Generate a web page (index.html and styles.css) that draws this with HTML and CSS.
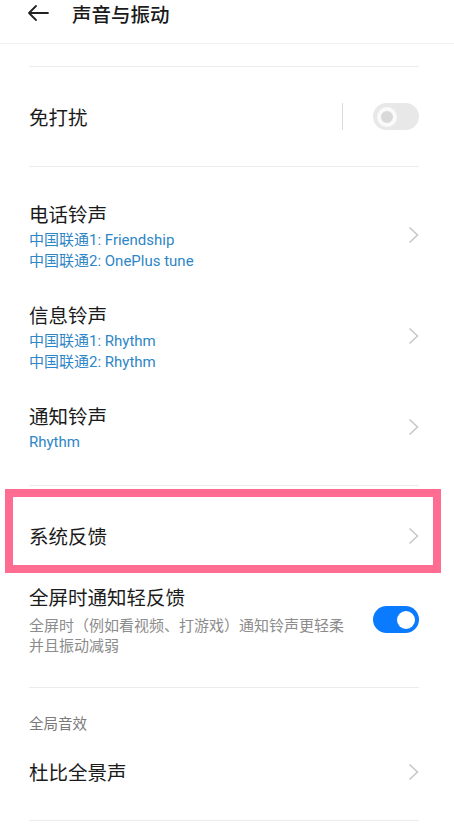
FILE: index.html
```html
<!DOCTYPE html>
<html lang="zh-CN">
<head>
<meta charset="utf-8">
<title>声音与振动</title>
<link rel="stylesheet" href="styles.css">
</head>
<body>
<div class="page">
  <header class="topbar">
    <svg class="back" width="22" height="18" viewBox="0 0 22 18"><path d="M21 9H2M9 2L2 9l7 7" fill="none" stroke="#222" stroke-width="1.8" stroke-linecap="round" stroke-linejoin="round"/></svg>
    <h1 class="title">声音与振动</h1>
  </header>

  <div class="gap-top"></div>
  <div class="divider"></div>

  <div class="row row-dnd">
    <span class="label">免打扰</span>
    <div class="switch-wrap">
      <span class="vline"></span>
      <span class="switch off"><span class="knob"></span></span>
    </div>
  </div>
  <div class="divider"></div>

  <section class="tones">
    <div class="item">
      <div class="text">
        <div class="label">电话铃声</div>
        <div class="sub">中国联通1: Friendship</div>
        <div class="sub">中国联通2: OnePlus tune</div>
      </div>
      <svg class="chev" width="11" height="18" viewBox="0 0 11 18"><path d="M1.5 1.5L9.5 9l-8 7.5" fill="none" stroke="#c6c6c6" stroke-width="1.5"/></svg>
    </div>
    <div class="item">
      <div class="text">
        <div class="label">信息铃声</div>
        <div class="sub">中国联通1: Rhythm</div>
        <div class="sub">中国联通2: Rhythm</div>
      </div>
      <svg class="chev" width="11" height="18" viewBox="0 0 11 18"><path d="M1.5 1.5L9.5 9l-8 7.5" fill="none" stroke="#c6c6c6" stroke-width="1.5"/></svg>
    </div>
    <div class="item">
      <div class="text">
        <div class="label">通知铃声</div>
        <div class="sub">Rhythm</div>
      </div>
      <svg class="chev" width="11" height="18" viewBox="0 0 11 18"><path d="M1.5 1.5L9.5 9l-8 7.5" fill="none" stroke="#c6c6c6" stroke-width="1.5"/></svg>
    </div>
  </section>
  <div class="divider"></div>

  <div class="row row-sys">
    <span class="label">系统反馈</span>
    <svg class="chev" width="11" height="18" viewBox="0 0 11 18"><path d="M1.5 1.5L9.5 9l-8 7.5" fill="none" stroke="#c6c6c6" stroke-width="1.5"/></svg>
    <div class="highlight"></div>
  </div>

  <div class="row row-full">
    <div class="text">
      <div class="label">全屏时通知轻反馈</div>
      <div class="desc">全屏时（例如看视频、打游戏）通知铃声更轻柔<br>并且振动减弱</div>
    </div>
    <span class="switch on"><span class="knob"></span></span>
  </div>
  <div class="divider"></div>

  <div class="group-title">全局音效</div>
  <div class="row row-dolby">
    <span class="label">杜比全景声</span>
    <svg class="chev" width="11" height="18" viewBox="0 0 11 18"><path d="M1.5 1.5L9.5 9l-8 7.5" fill="none" stroke="#c6c6c6" stroke-width="1.5"/></svg>
  </div>
  <div class="divider"></div>
</div>
</body>
</html>
```

FILE: styles.css
```css
* { box-sizing: border-box; margin: 0; padding: 0; }

html, body {
  background: #fff;
}

body {
  font-family: Roboto, "Noto Sans CJK SC", sans-serif;
  color: #1b1b1b;
  width: 454px;
  height: 836px;
  overflow: hidden;
}

.page {
  width: 454px;
}

.topbar {
  height: 44px;
  border-bottom: 1px solid #f1f1f1;
  display: flex;
  align-items: flex-start;
  padding: 0 0 0 27px;
}

.back {
  display: block;
  margin-top: 4px;
}

.title {
  font-family: "Noto Sans CJK SC", sans-serif;
  font-weight: 500;
  font-size: 19.5px;
  line-height: 28px;
  margin-left: 23px;
  color: #1a1a1a;
}

.gap-top {
  height: 22px;
}

.divider {
  height: 1px;
  background: #ececec;
  margin: 0 35px 0 29px;
}

.row {
  display: flex;
  align-items: center;
  justify-content: space-between;
  padding: 0 35px 0 29px;
}

.label {
  font-family: "Noto Sans CJK SC", sans-serif;
  font-size: 19.5px;
  line-height: 26px;
  color: #1b1b1b;
}

.row-dnd {
  height: 99px;
}

.switch-wrap {
  display: flex;
  align-items: center;
  gap: 30px;
}

.vline {
  display: block;
  width: 1px;
  height: 27px;
  background: #dadada;
}

.switch {
  position: relative;
  display: block;
  width: 46px;
  height: 27px;
  border-radius: 14px;
}

.switch.off {
  background: #e8e8e8;
}

.switch.off .knob {
  position: absolute;
  left: 3.5px;
  top: 3.5px;
  width: 20px;
  height: 20px;
  border-radius: 50%;
  background: #d9d9d9;
  border: 4.5px solid #fafafa;
}

.switch.on {
  background: #0a7bff;
}

.switch.on .knob {
  position: absolute;
  right: 4px;
  top: 4.5px;
  width: 18px;
  height: 18px;
  border-radius: 50%;
  background: #fff;
}

.tones {
  padding: 19px 0 17px;
}

.item {
  display: flex;
  align-items: center;
  justify-content: space-between;
  padding: 15px 35px 15px 29px;
}

.item .label {
  margin-bottom: 3px;
}

.item .chev {
  margin-top: -3px;
}

.sub {
  font-family: Roboto, "Noto Sans CJK SC", sans-serif;
  font-size: 15px;
  line-height: 21px;
  color: #2e86c6;
}

.chev {
  display: block;
  flex: none;
}

.row-sys {
  position: relative;
  height: 98px;
  padding-top: 2px;
}

.highlight {
  position: absolute;
  left: 5px;
  top: 3px;
  width: 436px;
  height: 84px;
  border: 8px solid #fe6c92;
  pointer-events: none;
}

.row-full {
  align-items: center;
  padding-bottom: 32px;
}

.row-full .label {
  margin-bottom: 5px;
}

.desc {
  font-family: "Noto Sans CJK SC", sans-serif;
  font-size: 15px;
  line-height: 20px;
  color: #8c8c8c;
}

.group-title {
  font-family: "Noto Sans CJK SC", sans-serif;
  font-size: 14.5px;
  line-height: 20px;
  color: #7a7a7a;
  padding: 25px 0 0 29px;
}

.row-dolby {
  padding-top: 26px;
  padding-bottom: 35px;
}
```
